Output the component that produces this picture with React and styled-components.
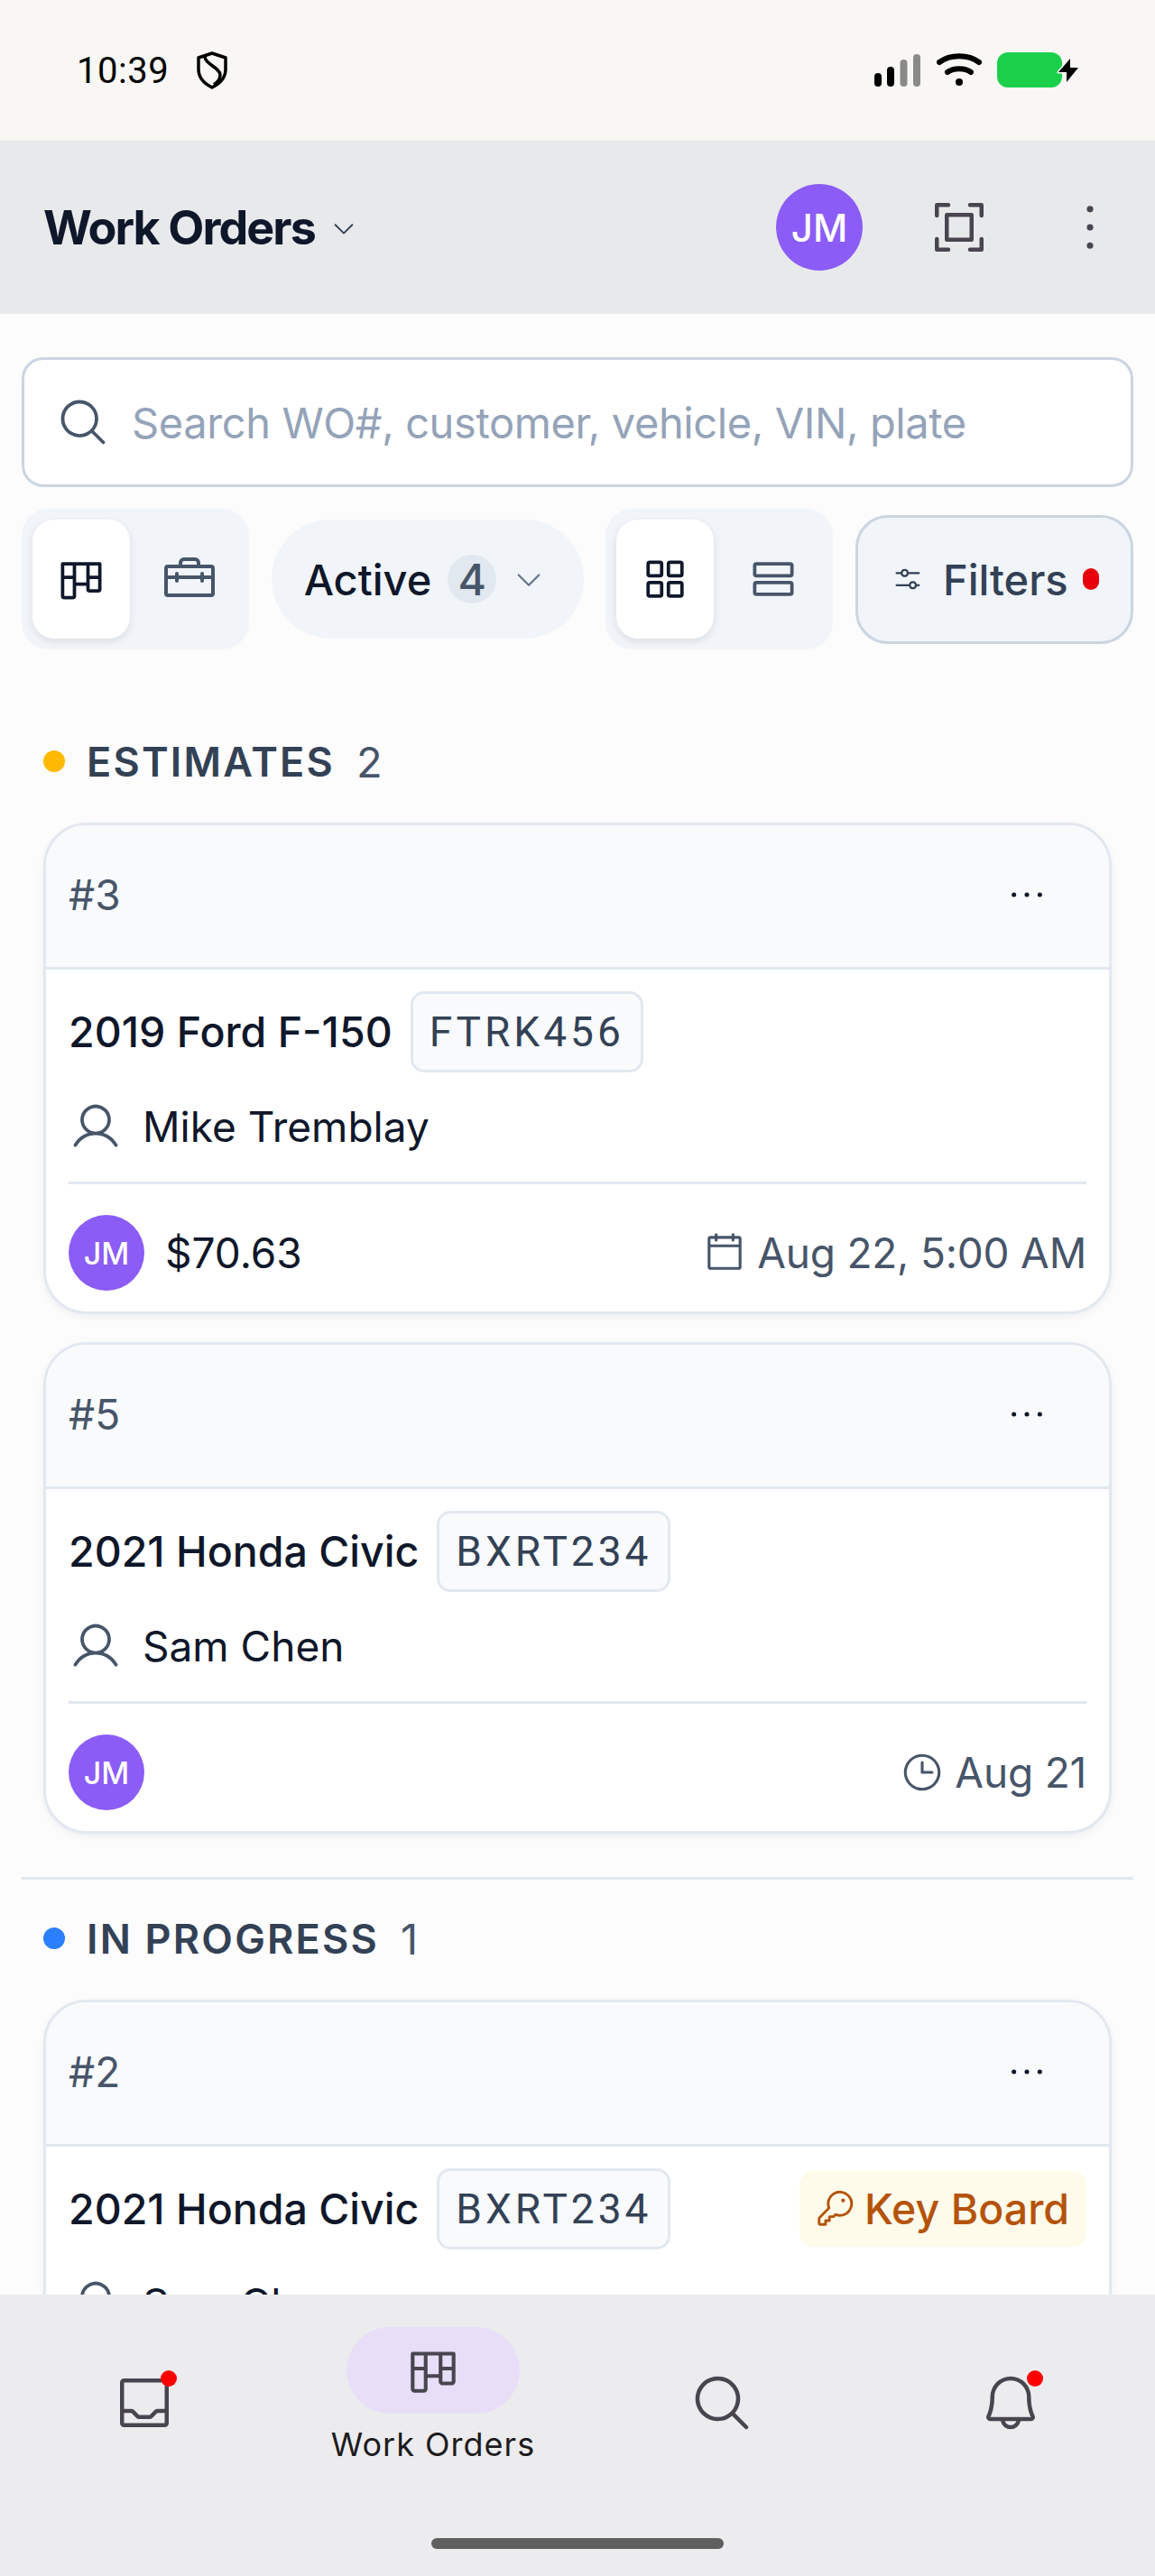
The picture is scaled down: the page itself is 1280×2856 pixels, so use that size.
import React from 'react'
import styled, { createGlobalStyle } from 'styled-components'
import {
  PiKanban,
  PiToolbox,
  PiMagnifyingGlass,
  PiTray,
  PiBell,
  PiUser,
  PiCalendarBlank,
  PiClock,
  PiKey,
  PiDotsThree,
  PiDotsThreeVertical,
  PiSquaresFour,
  PiRows,
  PiSlidersHorizontal,
  PiCaretDown,
} from 'react-icons/pi'

const GlobalStyle = createGlobalStyle`
  * { box-sizing: border-box; }
  html, body { margin: 0; padding: 0; background: #fcfcfd; }
  body { font-family: "Inter", "Noto Sans", sans-serif; }
`

const Phone = styled.div`
  width: 1280px;
  height: 2856px;
  display: flex;
  flex-direction: column;
  overflow: hidden;
  background: #fcfcfd;
`

const StatusBar = styled.div`
  height: 156px;
  flex: none;
  background: #f8f7f3;
  display: flex;
  align-items: center;
  justify-content: space-between;
  padding: 0 83px 0 85px;
  color: #000;
`

const StatusLeft = styled.div`
  display: flex;
  align-items: center;
  gap: 30px;
  font-size: 40px;
  letter-spacing: 0.5px;
  font-family: "Roboto", sans-serif;
`

const StatusRight = styled.div`
  display: flex;
  align-items: center;
  gap: 17px;
`

const TopBar = styled.div`
  height: 192px;
  flex: none;
  background: #e8e9eb;
  display: flex;
  align-items: center;
  padding: 0 34px 0 48px;
`

const Title = styled.div`
  font-size: 52px;
  font-weight: 700;
  color: #0f172a;
  letter-spacing: -1.9px;
`

const TitleCaret = styled(PiCaretDown)`
  font-size: 30px;
  color: #334155;
  margin-left: 17px;
  margin-top: 2px;
`

const TopActions = styled.div`
  margin-left: auto;
  display: flex;
  align-items: center;
  gap: 80px;
`

const Avatar = styled.div`
  width: ${p => p.$size}px;
  height: ${p => p.$size}px;
  border-radius: 50%;
  background: #8b5cf6;
  color: #fff;
  font-weight: 500;
  font-size: ${p => p.$font}px;
  display: flex;
  align-items: center;
  justify-content: center;
  flex: none;
`

const TopIcon = styled.div`
  display: flex;
  color: #49454f;
`

const Content = styled.div`
  flex: 1;
  min-height: 0;
  overflow: hidden;
  padding: 48px 24px 0;
`

const SearchBox = styled.div`
  height: 144px;
  background: #fff;
  border: 3px solid #cbd5e1;
  border-radius: 24px;
  display: flex;
  align-items: center;
  padding: 0 35px;
  gap: 24px;
  color: #475569;
`

const Placeholder = styled.span`
  font-size: 47px;
  color: #94a3b8;
  letter-spacing: -0.4px;
`

const Controls = styled.div`
  margin-top: 24px;
  display: flex;
  align-items: center;
  justify-content: space-between;
`

const Toggle = styled.div`
  width: 252px;
  height: 156px;
  padding: 12px 0 12px 12px;
  border-radius: 30px;
  background: #f1f5f9;
  display: flex;
`

const ToggleItem = styled.div`
  width: ${p => (p.$active ? 108 : 132)}px;
  height: 132px;
  border-radius: 24px;
  display: flex;
  align-items: center;
  justify-content: center;
  font-size: ${p => p.$icon || 60}px;
  background: ${p => (p.$active ? '#fff' : 'transparent')};
  color: ${p => (p.$active ? '#0f172a' : '#475569')};
  box-shadow: ${p => (p.$active ? '0 3px 9px rgba(15,23,42,.1)' : 'none')};
`

const StatusPill = styled.div`
  width: 346px;
  height: 132px;
  border-radius: 66px;
  background: #f1f5f9;
  display: flex;
  align-items: center;
  padding-left: 36px;
  color: #0f172a;
  font-size: 47px;
  font-weight: 450;
`

const CountBadge = styled.span`
  width: 54px;
  height: 54px;
  margin-left: 18px;
  border-radius: 50%;
  background: #e2e8f0;
  color: #475569;
  display: flex;
  align-items: center;
  justify-content: center;
  font-size: 48px;
`

const PillCaret = styled(PiCaretDown)`
  font-size: 36px;
  color: #64748b;
  margin-left: 18px;
`

const FilterButton = styled.div`
  width: 308px;
  height: 143px;
  border: 3px solid #cbd5e1;
  border-radius: 36px;
  background: #f1f5f9;
  display: flex;
  align-items: center;
  padding-left: 37px;
  color: #334155;
  font-size: 47px;
  font-weight: 450;
  gap: 21px;
`

const RedDot = styled.span`
  width: 18px;
  height: 24px;
  border-radius: 9px;
  background: #e7000b;
  margin-left: -5px;
`

const Column = styled.section`
  padding: 0 24px;
  margin-top: ${p => p.$top || 0}px;
`

const ColumnHead = styled.div`
  display: flex;
  align-items: center;
  height: 50px;
  margin-bottom: 43px;
  font-size: 45px;
  color: #334155;
`

const ColumnDot = styled.span`
  width: 24px;
  height: 24px;
  border-radius: 50%;
  background: ${p => p.$color};
  margin-right: 24px;
`

const ColumnName = styled.span`
  font-weight: 600;
  letter-spacing: 2.2px;
`

const ColumnCount = styled.span`
  margin-left: 24px;
  font-size: 47px;
  color: #475569;
`

const Card = styled.article`
  background: #fff;
  border: 3px solid #e2e8f0;
  border-radius: 48px;
  box-shadow: 0 3px 9px rgba(15, 23, 42, 0.06);
  overflow: hidden;
  margin-bottom: 31px;
`

const CardHead = styled.div`
  height: 160px;
  background: #f8fafc;
  border-bottom: 3px solid #e2e8f0;
  display: flex;
  align-items: center;
  justify-content: space-between;
  padding: 0 64px 3px 25px;
  font-size: 46px;
  color: #475569;
`

const CardBody = styled.div`
  padding: 24px 25px 0;
`

const VehicleRow = styled.div`
  display: flex;
  align-items: center;
  height: 90px;
  font-size: 46.5px;
  font-weight: 450;
  color: #0f172a;
`

const Plate = styled.span`
  height: 90px;
  margin-left: 20px;
  padding: 0 18px;
  display: flex;
  align-items: center;
  border: 3px solid #e2e8f0;
  border-radius: 15px;
  background: #f8fafc;
  color: #334155;
  font-family: "Roboto", sans-serif;
  font-weight: 400;
  font-size: 46px;
  letter-spacing: 4px;
`

const KeyTag = styled.span`
  margin-left: auto;
  height: 84px;
  padding: 0 19px 0 16px;
  display: flex;
  align-items: center;
  gap: 10px;
  border-radius: 15px;
  background: #fffbeb;
  color: #b45309;
  font-size: 46.5px;
  font-weight: 450;
`

const CustomerRow = styled.div`
  display: flex;
  align-items: center;
  gap: 22px;
  margin-top: 15px;
  height: 90px;
  font-size: 46px;
  color: #0f172a;
`

const UserIcon = styled(PiUser)`
  font-size: 60px;
  color: #475569;
  flex: none;
`

const CardFoot = styled.div`
  margin-top: 16px;
  padding: 34px 0 23px;
  border-top: 3px solid #e2e8f0;
  display: flex;
  align-items: center;
  font-size: 46px;
  color: #0f172a;
`

const Price = styled.span`
  margin-left: 23px;
`

const DateText = styled.span`
  margin-left: auto;
  display: flex;
  align-items: center;
  gap: 11px;
  color: #475569;
  font-size: 46px;
  letter-spacing: -0.2px;
`

const Divider = styled.hr`
  margin: 48px 0 40px;
  border: 0;
  border-top: 3px solid #e2e8f0;
`

const BottomNav = styled.nav`
  height: 312px;
  flex: none;
  background: #ececee;
  position: relative;
  display: grid;
  grid-template-columns: 320px 320px 320px 320px;
  padding-top: 36px;
`

const NavItem = styled.div`
  display: flex;
  flex-direction: column;
  align-items: center;
  color: #49454f;
`

const NavPill = styled.div`
  width: 192px;
  height: 96px;
  border-radius: 48px;
  background: ${p => (p.$active ? '#e8def8' : 'transparent')};
  display: flex;
  align-items: center;
  justify-content: center;
  position: relative;
  margin-top: ${p => (p.$active ? 0 : 36)}px;
  font-size: 72px;
`

const NavDot = styled.span`
  position: absolute;
  top: 12px;
  left: 114px;
  width: 18px;
  height: 18px;
  border-radius: 50%;
  background: #f00;
`

const NavLabel = styled.span`
  margin-top: 12px;
  font-size: 36px;
  color: #1d1b20;
  letter-spacing: 1px;
`

const HomeBar = styled.div`
  position: absolute;
  left: 478px;
  top: 270px;
  width: 324px;
  height: 12px;
  border-radius: 6px;
  background: #5f5f5f;
`

const ShieldIcon = () => (
  <svg width="36" height="42" viewBox="0 0 36 42" fill="none" stroke="#000" strokeWidth="3.500" strokeLinejoin="round">
    <path d="M18 2 L33 7 V20 C33 30 26 36 18 40 C10 36 3 30 3 20 V7 Z" />
    <path d="M10 6 C10 14 27 18 27 26 C27 31 23 35 20 37" />
  </svg>
)

const SignalIcon = () => (
  <svg width="52" height="36" viewBox="0 0 52 36">
    <rect x="0" y="21" width="8" height="15" rx="4" fill="#000" />
    <rect x="14" y="14" width="8" height="22" rx="4" fill="#000" />
    <rect x="28.500" y="6" width="8" height="30" rx="4" fill="#8a8a86" />
    <rect x="43" y="0" width="8" height="36" rx="4" fill="#8a8a86" />
  </svg>
)

const WifiIcon = () => (
  <svg width="50" height="38" viewBox="0 0 50 38" fill="none" stroke="#000" strokeWidth="6" strokeLinecap="round">
    <path d="M3 10 C15 1 35 1 47 10" />
    <path d="M12 21 C19 16 31 16 38 21" />
    <circle cx="25" cy="32" r="4" fill="#000" stroke="none" />
  </svg>
)

const BatteryIcon = () => (
  <svg width="92" height="40" viewBox="0 0 92 40">
    <rect x="0" y="0" width="72" height="39" rx="12" fill="#1ad04b" />
    <path d="M81 7 L68 22 H77 V33 L90 17 H81 Z" fill="#000" stroke="#f8f7f3" strokeWidth="3" paintOrder="stroke" strokeLinejoin="round" />
  </svg>
)

const ScanIcon = () => (
  <svg width="54" height="54" viewBox="0 0 54 54" fill="none" stroke="currentColor" strokeWidth="4.500" strokeLinecap="round" strokeLinejoin="round">
    <path d="M2.250 14 V2.250 H15" />
    <path d="M39 2.250 H51.750 V14" />
    <path d="M51.750 40 V51.750 H39" />
    <path d="M15 51.750 H2.250 V40" />
    <rect x="13.250" y="13.250" width="27.500" height="27.500" />
  </svg>
)

function WorkOrderCard({ no, vehicle, plate, keyTag, customer, price, date, dateIcon }) {
  return (
    <Card>
      <CardHead>
        <span>{no}</span>
        <PiDotsThree size={54} color="#0f172a" />
      </CardHead>
      <CardBody>
        <VehicleRow>
          {vehicle}
          <Plate>{plate}</Plate>
          {keyTag && <KeyTag><PiKey size={46} />Key Board</KeyTag>}
        </VehicleRow>
        <CustomerRow><UserIcon />{customer}</CustomerRow>
        <CardFoot>
          <Avatar $size={84} $font={34}>JM</Avatar>
          {price && <Price>{price}</Price>}
          <DateText>{dateIcon}{date}</DateText>
        </CardFoot>
      </CardBody>
    </Card>
  )
}

export default function App() {
  return (
    <Phone>
      <GlobalStyle />
      <StatusBar>
        <StatusLeft>10:39 <ShieldIcon /></StatusLeft>
        <StatusRight>
          <SignalIcon />
          <WifiIcon />
          <BatteryIcon />
        </StatusRight>
      </StatusBar>

      <TopBar>
        <Title>Work Orders</Title>
        <TitleCaret />
        <TopActions>
          <Avatar $size={96} $font={42}>JM</Avatar>
          <TopIcon><ScanIcon /></TopIcon>
          <TopIcon><PiDotsThreeVertical size={76} /></TopIcon>
        </TopActions>
      </TopBar>

      <Content>
        <SearchBox>
          <PiMagnifyingGlass size={60} />
          <Placeholder>Search WO#, customer, vehicle, VIN, plate</Placeholder>
        </SearchBox>

        <Controls>
          <Toggle>
            <ToggleItem $active><PiKanban /></ToggleItem>
            <ToggleItem $icon={64}><PiToolbox /></ToggleItem>
          </Toggle>
          <StatusPill>
            Active
            <CountBadge>4</CountBadge>
            <PillCaret />
          </StatusPill>
          <Toggle>
            <ToggleItem $active><PiSquaresFour /></ToggleItem>
            <ToggleItem><PiRows /></ToggleItem>
          </Toggle>
          <FilterButton>
            <PiSlidersHorizontal size={36} />
            Filters
            <RedDot />
          </FilterButton>
        </Controls>

        <Column $top={99}>
          <ColumnHead>
            <ColumnDot $color="#ffb900" />
            <ColumnName>ESTIMATES</ColumnName>
            <ColumnCount>2</ColumnCount>
          </ColumnHead>
          <WorkOrderCard
            no="#3"
            vehicle="2019 Ford F-150"
            plate="FTRK456"
            customer="Mike Tremblay"
            price="$70.63"
            date="Aug 22, 5:00 AM"
            dateIcon={<PiCalendarBlank size={50} />}
          />
          <WorkOrderCard
            no="#5"
            vehicle="2021 Honda Civic"
            plate="BXRT234"
            customer="Sam Chen"
            date="Aug 21"
            dateIcon={<PiClock size={50} />}
          />
        </Column>

        <Divider />

        <Column>
          <ColumnHead>
            <ColumnDot $color="#2b7fff" />
            <ColumnName>IN PROGRESS</ColumnName>
            <ColumnCount>1</ColumnCount>
          </ColumnHead>
          <WorkOrderCard
            no="#2"
            vehicle="2021 Honda Civic"
            plate="BXRT234"
            keyTag
            customer="Sam Chen"
            date="Aug 21"
            dateIcon={<PiClock size={50} />}
          />
        </Column>
      </Content>

      <BottomNav>
        <NavItem>
          <NavPill><PiTray /><NavDot /></NavPill>
        </NavItem>
        <NavItem>
          <NavPill $active><PiKanban size={66} /></NavPill>
          <NavLabel>Work Orders</NavLabel>
        </NavItem>
        <NavItem>
          <NavPill><PiMagnifyingGlass /></NavPill>
        </NavItem>
        <NavItem>
          <NavPill><PiBell /><NavDot /></NavPill>
        </NavItem>
        <HomeBar />
      </BottomNav>
    </Phone>
  )
}
